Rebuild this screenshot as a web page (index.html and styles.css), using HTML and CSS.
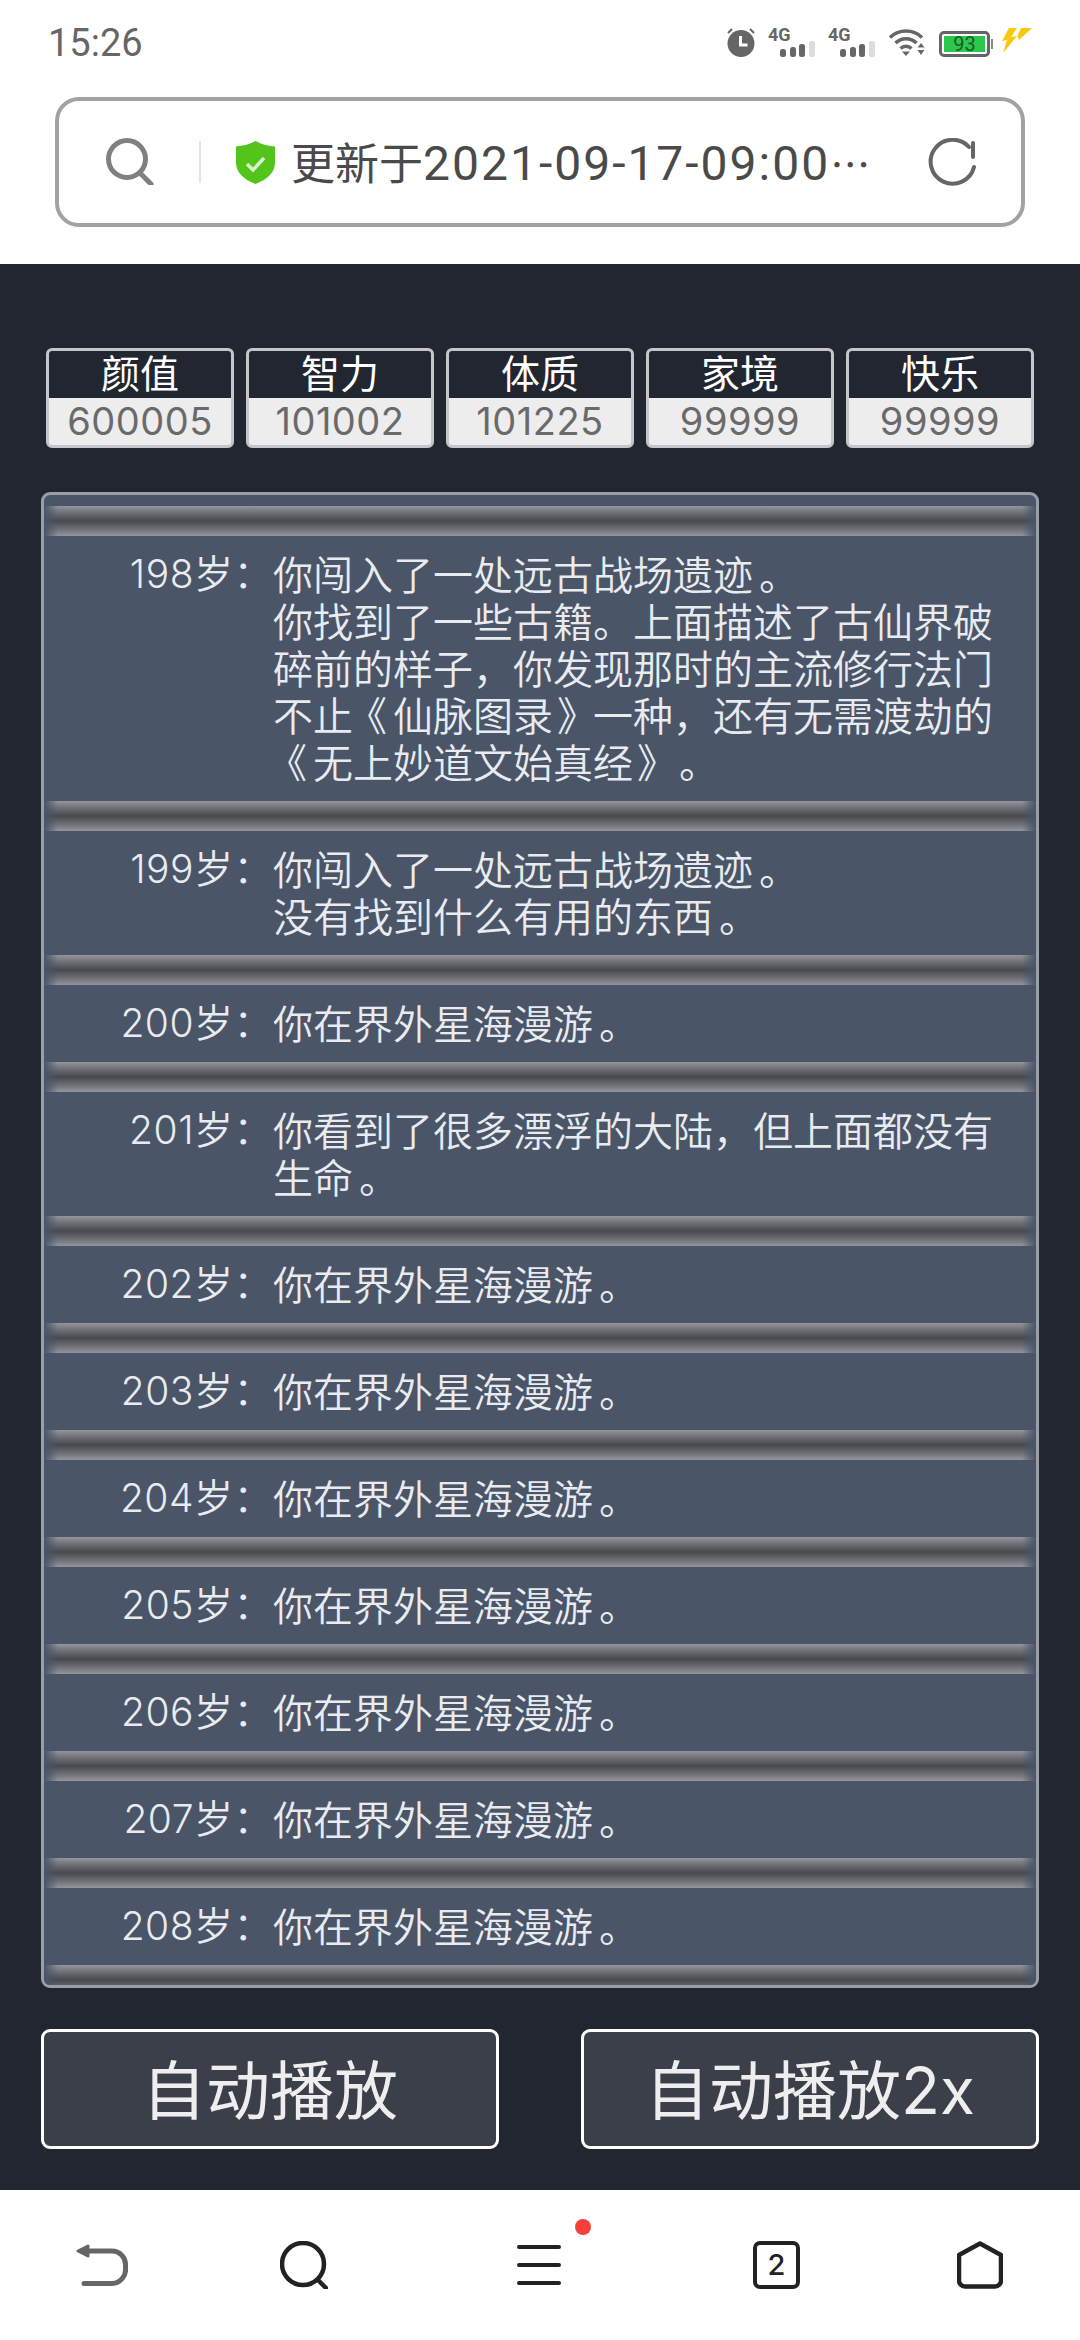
FILE: index.html
```html
<!DOCTYPE html>
<html lang="zh-CN">
<head>
<meta charset="utf-8">
<title>人生重开模拟器</title>
<link rel="stylesheet" href="styles.css">
</head>
<body>
<div class="status">
  <span class="time">15:26</span>
  <div class="status-icons">
    <svg width="28" height="29" viewBox="0 0 28 29"><circle cx="14" cy="15.500" r="13.500" fill="#666"/><path d="M13.500 8v9h7" fill="none" stroke="#fff" stroke-width="3"/><path d="M1 5l4-4M27 5l-4-4" stroke="#666" stroke-width="2"/></svg>
    <div class="sig"><span class="sig-t">4G</span><svg width="35" height="16" viewBox="0 0 35 16"><rect x="0" y="8" width="6" height="8" rx="2.500" fill="#666"/><rect x="10" y="6" width="6" height="10" rx="2.500" fill="#666"/><rect x="19" y="3" width="6" height="13" rx="2.500" fill="#666"/><rect x="29" y="0" width="6" height="16" rx="2" fill="#ddd"/></svg></div>
    <div class="sig"><span class="sig-t">4G</span><svg width="35" height="16" viewBox="0 0 35 16"><rect x="0" y="8" width="6" height="8" rx="2.500" fill="#666"/><rect x="10" y="6" width="6" height="10" rx="2.500" fill="#666"/><rect x="19" y="3" width="6" height="13" rx="2.500" fill="#666"/><rect x="29" y="0" width="6" height="16" rx="2" fill="#ddd"/></svg></div>
    <svg width="37" height="28" viewBox="0 0 37 28"><path d="M2 9.500a23 23 0 0 1 32 0M7.500 15a15 15 0 0 1 21 0M12.500 20.500a8 8 0 0 1 11 0" fill="none" stroke="#666" stroke-width="3.500"/><path d="M14 23.500h8l-4 4.500zM29.500 19.500l3.500-4.500 3.500 4.500zM29.500 22h7l-3.500 5z" fill="#666"/></svg>
    <div class="batt"><div class="batt-body"><span class="batt-fill">93</span></div><i class="batt-nub"></i></div>
    <svg width="30" height="25" viewBox="0 0 30 25"><path d="M7 0h8L9 9l6-1L1 25 5 12l-5 1zM19 0h11L17 12l-1-3 5-1-6 1z" fill="#f6c90e"/></svg>
  </div>
</div>

<div class="addr-wrap">
  <div class="addr">
    <svg class="addr-search" width="48" height="48" viewBox="0 0 48 48"><circle cx="21" cy="22" r="18.500" fill="none" stroke="#808080" stroke-width="5"/><path d="M34 36l11 11" stroke="#808080" stroke-width="5" stroke-linecap="round"/></svg>
    <i class="addr-div"></i>
    <svg class="addr-shield" width="39" height="43" viewBox="0 0 39 43"><path d="M19.500 0c5 3 12 5 19.500 5.500V22c0 10-9 17-19.500 21C9 39 0 32 0 22V5.500C7.500 5 14.500 3 19.500 0z" fill="#52c41a"/><path d="M11 23l6 6 11-12" fill="none" stroke="#d9f2c9" stroke-width="3.500"/></svg>
    <span class="addr-text"><span class="addr-cn">更新于</span>2021-09-17-09:00<span class="addr-more">⋯</span></span>
    <svg class="addr-reload" width="48" height="48" viewBox="0 0 48 48"><path d="M46 29A22 22 0 1 1 41 9" fill="none" stroke="#666" stroke-width="4" stroke-linecap="round"/><path d="M45 5v14" stroke="#666" stroke-width="4" stroke-linecap="round" fill="none"/></svg>
  </div>
</div>

<main class="page">
  <div class="stats">
    <div class="stat"><div class="stat-h">颜值</div><div class="stat-v">600005</div></div>
    <div class="stat"><div class="stat-h">智力</div><div class="stat-v">101002</div></div>
    <div class="stat"><div class="stat-h">体质</div><div class="stat-v">101225</div></div>
    <div class="stat"><div class="stat-h">家境</div><div class="stat-v">99999</div></div>
    <div class="stat"><div class="stat-h">快乐</div><div class="stat-v">99999</div></div>
  </div>

  <div class="log">
    <div class="sep"></div>
    <div class="row"><span class="age">198岁：</span><span class="txt">你闯入了一处远古战场遗迹<span class="stop">。</span><br>你找到了一些古籍。上面描述了古仙界破碎前的样子，你发现那时的主流修行法门不止<span class="lq">《</span>仙脉图录<span class="rq">》</span>一种，还有无需渡劫的<span class="lq">《</span>无上妙道文始真经<span class="rq">》</span><span class="stop">。</span></span></div>
    <div class="sep"></div>
    <div class="row"><span class="age">199岁：</span><span class="txt">你闯入了一处远古战场遗迹<span class="stop">。</span><br>没有找到什么有用的东西<span class="stop">。</span></span></div>
    <div class="sep"></div>
    <div class="row"><span class="age">200岁：</span><span class="txt">你在界外星海漫游<span class="stop">。</span></span></div>
    <div class="sep"></div>
    <div class="row"><span class="age">201岁：</span><span class="txt">你看到了很多漂浮的大陆，但上面都没有生命<span class="stop">。</span></span></div>
    <div class="sep"></div>
    <div class="row"><span class="age">202岁：</span><span class="txt">你在界外星海漫游<span class="stop">。</span></span></div>
    <div class="sep"></div>
    <div class="row"><span class="age">203岁：</span><span class="txt">你在界外星海漫游<span class="stop">。</span></span></div>
    <div class="sep"></div>
    <div class="row"><span class="age">204岁：</span><span class="txt">你在界外星海漫游<span class="stop">。</span></span></div>
    <div class="sep"></div>
    <div class="row"><span class="age">205岁：</span><span class="txt">你在界外星海漫游<span class="stop">。</span></span></div>
    <div class="sep"></div>
    <div class="row"><span class="age">206岁：</span><span class="txt">你在界外星海漫游<span class="stop">。</span></span></div>
    <div class="sep"></div>
    <div class="row"><span class="age">207岁：</span><span class="txt">你在界外星海漫游<span class="stop">。</span></span></div>
    <div class="sep"></div>
    <div class="row"><span class="age">208岁：</span><span class="txt">你在界外星海漫游<span class="stop">。</span></span></div>
    <div class="sep"></div>
  </div>

  <div class="btns">
    <button class="btn">自动播放</button>
    <button class="btn">自动播放2x</button>
  </div>
</main>

<nav class="nav">
  <svg width="52" height="42" viewBox="0 0 52 42"><path d="M12 7h24a13.500 13.500 0 0 1 13.500 14v3a14 14 0 0 1-13.500 15.500H8" fill="none" stroke="#666" stroke-width="5" stroke-linecap="round"/><path d="M2 7l10-5v10z" fill="#666" stroke="#666" stroke-width="3" stroke-linejoin="round"/></svg>
  <svg width="48" height="48" viewBox="0 0 48 48"><circle cx="23" cy="23" r="21" fill="none" stroke="#222" stroke-width="4.500"/><path d="M38 39l8 8" stroke="#222" stroke-width="4.500" stroke-linecap="round"/></svg>
  <div class="menu"><svg width="44" height="40" viewBox="0 0 44 40"><path d="M2 2h40M2 20h40M2 38h40" stroke="#222" stroke-width="4" stroke-linecap="round"/></svg><i class="dot"></i></div>
  <div class="tabs">2</div>
  <svg width="46" height="48" viewBox="0 0 46 48"><path d="M23 2.500L44 14v25a6 6 0 0 1-6 6.500H8a6 6 0 0 1-6-6.500V14z" fill="none" stroke="#222" stroke-width="4.500" stroke-linejoin="round"/></svg>
</nav>
</body>
</html>
```
FILE: styles.css
```css
* { box-sizing: border-box; }
html, body { margin: 0; padding: 0; }
body {
  width: 1080px;
  height: 2340px;
  overflow: hidden;
  background: #fff;
  font-family: "Noto Sans CJK SC", sans-serif;
  display: flex;
  flex-direction: column;
}
.status {
  height: 82px;
  flex: none;
  display: flex;
  align-items: flex-start;
  justify-content: space-between;
  padding: 28px 48px 0;
}
.time { font: 400 38px/30px Roboto, sans-serif; color: #666; }
.status-icons { display: flex; align-items: flex-start; gap: 13px; height: 30px; }
.sig { position: relative; width: 47px; height: 29px; display: flex; justify-content: flex-end; align-items: flex-end; }
.sig-t { position: absolute; left: 0; top: -2px; font: 700 18px/18px Roboto, sans-serif; color: #666; }
.batt { display: flex; align-items: center; width: 54px; height: 26px; margin: 3px -4px 0 1px; }
.batt-body { width: 51px; height: 26px; border: 3px solid #666; border-radius: 5px; padding: 2px; flex: none; }
.batt-fill { display: block; height: 100%; background: #2cc84d; color: #1b5b2a; font: 400 20px/16px Roboto, sans-serif; text-align: center; }
.batt-nub { width: 2px; height: 10px; margin-left: 1px; background: #888; flex: none; }
.addr-wrap { flex: none; height: 182px; padding: 15px 55px 0; }
.addr {
  height: 130px;
  border: 4px solid #a2a2a2;
  border-radius: 24px;
  display: flex;
  align-items: center;
  padding: 0 45px 0 47px;
}
.addr-search { flex: none; margin-top: -2px; }
.addr-div { width: 2px; height: 42px; background: #e4e4e4; margin: 0 35px 0 45px; flex: none; }
.addr-shield { flex: none; }
.addr-text { flex: 1; margin: 3px 0 0 16px; font: 400 48px/52px Roboto, "Noto Sans CJK SC", sans-serif; letter-spacing: 2px; color: #4a4a4a; white-space: nowrap; }
.addr-cn { font-size: 44px; letter-spacing: 0; }
.addr-more { font-family: "Noto Sans CJK SC", sans-serif; font-size: 40px; letter-spacing: 0; }
.addr-reload { flex: none; }
.page {
  flex: 1;
  background: #212631;
  padding: 84px 41px 0;
  display: flex;
  flex-direction: column;
}
.stats { display: flex; gap: 12px; padding: 0 5px; height: 100px; }
.stat {
  width: 188px;
  border: 3px solid #c4c6ca;
  border-radius: 6px;
  background: #ededed;
  text-align: center;
}
.stat-h { height: 47px; background: #212631; color: #fff; font-size: 39px; line-height: 41px; border-radius: 3px 3px 0 0; }
.stat-v { color: #6a6a6a; font: 400 38px/47px Inter, sans-serif; letter-spacing: 0.5px; }
.log {
  margin-top: 44px;
  height: 1496px;
  border: 3px solid #9a9ea6;
  border-radius: 9px;
  background: #4a5568;
  padding-top: 11px;
  overflow: hidden;
  flex: none;
}
.sep {
  height: 30px;
  background:
    linear-gradient(90deg, #4a5568, rgba(74, 85, 104, 0) 14px, rgba(74, 85, 104, 0) calc(100% - 14px), #4a5568),
    linear-gradient(#93969c, #6f7177 22%, #47494f 50%, #6f7177 78%, #93969c);
}
.row {
  display: flex;
  padding: 14px 0 16px;
  font-size: 40px;
  font-weight: 350;
  line-height: 47px;
  color: #e8ebef;
  text-spacing-trim: space-all;
}
.age { width: 229px; flex: none; text-align: right; font-family: Inter, "Noto Sans CJK SC", sans-serif; font-size: 39px; letter-spacing: 0.5px; }
.txt { width: 720px; flex: none; }
.stop { margin-left: 6px; margin-right: -6px; }
.lq { margin-left: -6px; margin-right: 6px; }
.rq { margin-left: 4px; margin-right: -4px; }
.btns { display: flex; justify-content: space-between; margin-top: 41px; }
.btn {
  width: 458px;
  height: 120px;
  border: 3px solid #fff;
  border-radius: 9px;
  background: #3b3f49;
  color: #eee;
  font: 400 64px/1 Inter, "Noto Sans CJK SC", sans-serif;
  padding: 4px 0 0;
}
.nav {
  height: 150px;
  flex: none;
  display: grid;
  grid-template-columns: 204px 237px 236px 204px 46px;
  align-items: center;
  padding-left: 76px;
  background: #fff;
}
.menu { position: relative; width: 44px; height: 40px; }
.dot { position: absolute; left: 58px; top: -26px; width: 16px; height: 16px; border-radius: 50%; background: #f43f3b; }
.tabs {
  width: 47px;
  height: 48px;
  border: 4px solid #222;
  border-radius: 7px;
  color: #222;
  font: 500 29px/40px Inter, sans-serif;
  text-align: center;
}
```
